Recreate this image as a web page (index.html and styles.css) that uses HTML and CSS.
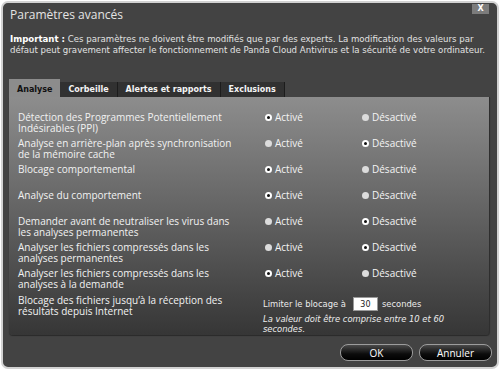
FILE: index.html
```html
<!DOCTYPE html>
<html lang="fr">
<head>
  <meta charset="UTF-8">
  <meta name="viewport" content="width=device-width, initial-scale=1.0">
  <title>Paramètres avancés</title>

  <link rel="stylesheet" href="styles.css">
</head>
<body>
  <div class="window">
    <div class="titlebar">
      <span class="title">Paramètres avancés</span>
      <button class="close-button">X</button>
    </div>

    <p class="notice"><b>Important :</b> Ces paramètres ne doivent être modifiés que par des experts. La modification des valeurs par<br>défaut peut gravement affecter le fonctionnement de Panda Cloud Antivirus et la sécurité de votre ordinateur.</p>

    <div class="tabs">
      <span class="tab active">Analyse</span>
      <span class="tab">Corbeille</span>
      <span class="tab">Alertes et rapports</span>
      <span class="tab">Exclusions</span>
    </div>

    <div class="panel">
      <div class="setting-row">
        <div class="setting-label">Détection des Programmes Potentiellement<br>Indésirables (PPI)</div>
        <label class="option"><span class="radio checked"></span>Activé</label>
        <label class="option"><span class="radio"></span>Désactivé</label>
      </div>
      <div class="setting-row">
        <div class="setting-label">Analyse en arrière-plan après synchronisation<br>de la mémoire cache</div>
        <label class="option"><span class="radio"></span>Activé</label>
        <label class="option"><span class="radio checked"></span>Désactivé</label>
      </div>
      <div class="setting-row">
        <div class="setting-label">Blocage comportemental</div>
        <label class="option"><span class="radio checked"></span>Activé</label>
        <label class="option"><span class="radio"></span>Désactivé</label>
      </div>
      <div class="setting-row">
        <div class="setting-label">Analyse du comportement</div>
        <label class="option"><span class="radio checked"></span>Activé</label>
        <label class="option"><span class="radio"></span>Désactivé</label>
      </div>
      <div class="setting-row">
        <div class="setting-label">Demander avant de neutraliser les virus dans<br>les analyses permanentes</div>
        <label class="option"><span class="radio"></span>Activé</label>
        <label class="option"><span class="radio checked"></span>Désactivé</label>
      </div>
      <div class="setting-row">
        <div class="setting-label">Analyser les fichiers compressés dans les<br>analyses permanentes</div>
        <label class="option"><span class="radio"></span>Activé</label>
        <label class="option"><span class="radio checked"></span>Désactivé</label>
      </div>
      <div class="setting-row">
        <div class="setting-label">Analyser les fichiers compressés dans les<br>analyses à la demande</div>
        <label class="option"><span class="radio checked"></span>Activé</label>
        <label class="option"><span class="radio"></span>Désactivé</label>
      </div>
      <div class="setting-row last-row">
        <div class="setting-label">Blocage des fichiers jusqu’à la réception des<br>résultats depuis Internet</div>
        <div class="limit">
          <div class="limit-line">
            <span>Limiter le blocage à</span>
            <input class="limit-input" type="text" value="30">
            <span>secondes</span>
          </div>
          <div class="limit-hint">La valeur doit être comprise entre 10 et 60<br>secondes.</div>
        </div>
      </div>
    </div>

    <div class="footer">
      <button class="dialog-button">OK</button>
      <button class="dialog-button">Annuler</button>
    </div>
  </div>
</body>
</html>
```

FILE: styles.css
```css
body, html {
  margin: 0;
  background: #ffffff;
}
.window {
  box-sizing: border-box;
  height: 368px;
  margin: 1px;
  padding: 0 5px 0 6px;
  border: solid 2px #d2d2d2;
  border-radius: 7px;
  background: #434343;
  font-family: "Open Sans", sans-serif;
  color: #ececec;
}
.titlebar {
  display: flex;
  align-items: flex-start;
  justify-content: space-between;
}
.title {
  margin: 4px 0 0 1px;
  font-size: 12px;
  line-height: 16px;
  color: #e4e4e4;
}
.close-button {
  width: 17px;
  height: 10px;
  margin: 1px 3px 0 0;
  padding: 0;
  border: none;
  background: #7c7c7c;
  color: #ffffff;
  font-family: "DejaVu Sans", sans-serif;
  font-weight: bold;
  font-size: 8px;
  line-height: 10px;
}
.notice {
  margin: 11px 0 0 1px;
  font-family: "DejaVu Sans", sans-serif;
  font-size: 8.6px;
  line-height: 11px;
  white-space: nowrap;
  color: #e2e2e2;
}
.notice b {
  color: #ffffff;
}
.tabs {
  display: flex;
  align-items: flex-end;
  margin-top: 23px;
  height: 18px;
}
.tab {
  padding: 2px 8px 1px;
  border-right: solid 1px #1c1c1c;
  background: #313131;
  font-family: "DejaVu Sans", sans-serif;
  font-weight: bold;
  font-size: 8px;
  line-height: 12px;
  color: #f4f4f4;
}
.tab.active {
  padding-top: 5px;
  border-right: none;
  background: #8c8c8c;
  color: #111111;
}
.panel {
  margin-right: 2px;
  padding: 15px 0 1px 9px;
  border-right: solid 1px #2e2e2e;
  border-radius: 0 0 4px 4px;
  background: linear-gradient(#8d8d8d, #363636);
  box-shadow: 0 1px 1px #2a2a2a;
}
.setting-row {
  display: grid;
  grid-template-columns: 247px 97px 1fr;
  height: 26px;
}
.setting-row.last-row {
  grid-template-columns: 245px 1fr;
  height: auto;
  margin-top: 1px;
}
.setting-label {
  font-size: 10px;
  line-height: 11px;
  white-space: nowrap;
  color: #f2f2f2;
}
.option {
  display: flex;
  align-items: flex-start;
  font-size: 10px;
  line-height: 11px;
  color: #f4f4f4;
}
.radio {
  box-sizing: border-box;
  width: 7px;
  height: 7px;
  margin: 2px 3px 0 0;
  border-radius: 50%;
  background: #dcdcdc;
}
.radio.checked {
  border: solid 2px #ffffff;
  background: #111111;
}
.limit {
  margin-top: 2px;
  font-family: "DejaVu Sans", sans-serif;
  font-size: 8.4px;
  color: #ececec;
}
.limit-line {
  display: flex;
  align-items: center;
  height: 14px;
}
.limit-input {
  box-sizing: border-box;
  width: 25px;
  height: 14px;
  margin: 0 4px 0 7px;
  padding: 0;
  border: solid 1px #9a9a9a;
  background: #ffffff;
  text-align: center;
  font-family: "DejaVu Sans", sans-serif;
  font-size: 8px;
  color: #222222;
}
.limit-hint {
  margin-top: 3px;
  font-style: italic;
  line-height: 10px;
  white-space: nowrap;
}
.footer {
  display: flex;
  justify-content: flex-end;
  gap: 6px;
  margin-top: 9px;
}
.dialog-button {
  width: 73px;
  height: 17px;
  padding: 0;
  border: solid 1px #9c9c9c;
  border-radius: 8px;
  background: linear-gradient(#4a4a4a, #0c0c0c 60%, #000000);
  color: #ffffff;
  font-family: "Open Sans", sans-serif;
  font-size: 10px;
}
```
